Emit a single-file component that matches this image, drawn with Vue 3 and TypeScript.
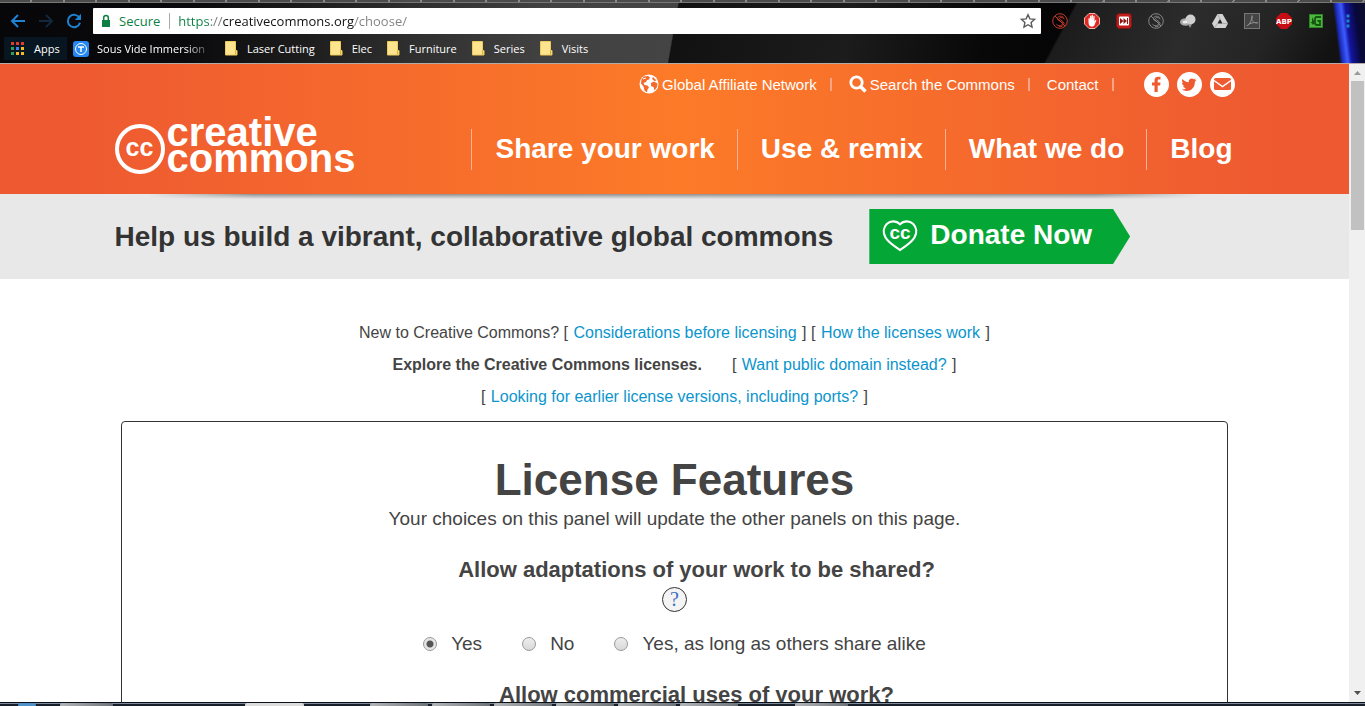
<script setup lang="ts">
import { ref } from 'vue'

const url = ref('https://creativecommons.org/choose/')
const folders: string[] = ['Laser Cutting', 'Elec', 'Furniture', 'Series', 'Visits']
const sections: string[] = ['Share your work', 'Use & remix', 'What we do', 'Blog']
const appColors: string[] = ['#e33b2e', '#e33b2e', '#e33b2e', '#2f9e57', '#3b82f0', '#f5b921', '#2f9e57', '#f5b921', '#f5b921']

interface Choice { value: string; label: string }
const choices: Choice[] = [
  { value: 'yes', label: 'Yes' },
  { value: 'no', label: 'No' },
  { value: 'sharealike', label: 'Yes, as long as others share alike' },
]
const adaptation = ref('yes')
</script>

<template>
  <div class="screen">
    <div class="chrome">
      <div class="tabs"></div>
      <div class="toolbar">
        <div class="nav-buttons">
          <button type="button" aria-label="Back">
            <svg width="16" height="16" viewBox="0 0 16 16"><path d="M15 8H2M8 2L2 8l6 6" fill="none" stroke="#1d83d4" stroke-width="2" /></svg>
          </button>
          <button type="button" aria-label="Forward">
            <svg width="16" height="16" viewBox="0 0 16 16"><path d="M1 8h13M8 2l6 6-6 6" fill="none" stroke="#12283c" stroke-width="2" /></svg>
          </button>
          <button type="button" aria-label="Reload">
            <svg width="16" height="16" viewBox="0 0 16 16"><path d="M13.500 5A6.200 6.200 0 1 0 14 9.800" fill="none" stroke="#1d83d4" stroke-width="2" /><path d="M15 .8v6.200H8.800z" fill="#1d83d4" /></svg>
          </button>
        </div>
        <div class="omnibox">
          <button type="button" class="secure">
            <svg width="10" height="14" viewBox="0 0 10 14"><path d="M1 6h8v7H1z" fill="#0b8043" /><path d="M2.700 6V3.800a2.300 2.300 0 0 1 4.600 0V6" fill="none" stroke="#0b8043" stroke-width="1.500" /></svg>
            Secure
          </button>
          <input v-model="url" class="url" type="text" aria-label="Address" spellcheck="false">
          <button type="button" aria-label="Bookmark this page" class="star">
            <svg width="16" height="16" viewBox="0 0 16 16"><path d="M8 1.700l1.900 4.200 4.600.5-3.400 3.100.9 4.500L8 11.700 4 14l.9-4.500L1.500 6.400l4.600-.5z" fill="none" stroke="#5a5a5a" stroke-width="1.400" /></svg>
          </button>
        </div>
        <div class="extensions">
          <button type="button" aria-label="Script blocker">
            <svg width="16" height="16" viewBox="0 0 16 16"><g fill="none" stroke="#c23a2b"><circle cx="8" cy="8" r="7.300" /><path d="M11.500 4.500C9 2 5 3.500 5.500 6s5 2 5 4.500-4 3-6 .8M12.500 6C10 4 7.500 4 7.500 5.500s4.500 2.500 4.500 5-3 3.500-5 3M3 3l10 10" /></g></svg>
          </button>
          <button type="button" aria-label="Ad blocker">
            <svg width="16" height="16" viewBox="0 0 16 16"><path d="M5 .5h6L15.500 5v6L11 15.500H5L.5 11V5z" fill="#df2822" stroke="#f4b4b0" /><path d="M4.500 9V5.500q.8-.8 1.200 0V8l.4-5q.7-.8 1.200 0v4.500l.4-5.500q.8-.6 1.200 0v5.500l.6-4.500q.9-.6 1.100.2l-.2 5.300 1-1.500q1-.6.9.5l-2 5Q9.500 14 7 13.500 4.500 13 4.500 9z" fill="#fff" /></svg>
          </button>
          <button type="button" aria-label="Speed control">
            <svg width="16" height="16" viewBox="0 0 16 16"><rect x=".5" y=".5" width="15" height="15" rx="3" fill="#be1d1b" stroke="#7a1615" /><rect x="3" y="3.500" width="10" height="9" rx="1" fill="#fff" /><path d="M4 5l3.500 3L4 11zM7.500 5L11 8l-3.500 3zM11 5h1v6h-1z" fill="#8f1716" /></svg>
          </button>
          <button type="button" aria-label="Style switcher">
            <svg width="16" height="16" viewBox="0 0 16 16"><g fill="none" stroke="#858585"><circle cx="8" cy="8" r="7.300" /><path d="M11.500 4.500C9 2 5 3.500 5.500 6s5 2 5 4.500-4 3-6 .8M12.500 6C10 4 7.500 4 7.500 5.500s4.500 2.500 4.500 5-3 3.500-5 3M3 3l10 10" /></g></svg>
          </button>
          <button type="button" aria-label="Globe tools">
            <svg width="16" height="16" viewBox="0 0 16 16"><ellipse cx="5.500" cy="9" rx="5.500" ry="3.800" fill="#a8a8a8" /><circle cx="10.500" cy="6.500" r="5" fill="#cfcfcf" /><path d="M8 11l2 4 2-4z" fill="#999" /><ellipse cx="5" cy="9" rx="2.500" ry="1.500" fill="#eee" /></svg>
          </button>
          <button type="button" aria-label="Drive">
            <svg width="16" height="16" viewBox="0 0 16 16"><path d="M5.500 1h5l5.500 9.500-2.500 4.500h-11L0 10.500z" fill="#d2d2d2" /><path d="M8 6l2.500 4.500h-5z" fill="#242424" /><path d="M5.500 1L8 6M16 10.500h-5.500M2.500 15l3-4.500" stroke="#aaa" /></svg>
          </button>
          <button type="button" aria-label="PDF converter">
            <svg width="16" height="16" viewBox="0 0 16 16"><rect x=".5" y=".5" width="15" height="15" fill="#444" stroke="#777" /><path d="M3 13c3-2 5-6 4.800-9.500C7.800 1.500 9 3 8 5.500s3 5 5.500 4.500S6 8.500 3 13z" fill="none" stroke="#909090" /></svg>
          </button>
          <button type="button" aria-label="Adblock Plus">
            <svg width="16" height="16" viewBox="0 0 16 16"><path d="M5 0h6l5 5v6l-5 5H5l-5-5V5z" fill="#c70d14" /><text x="8" y="10.500" text-anchor="middle" class="abp">ABP</text></svg>
          </button>
          <button type="button" aria-label="Downloader">
            <svg width="16" height="16" viewBox="0 0 16 16"><rect x="1.500" y="1.500" width="13" height="13" fill="#4cb83e" stroke="#2f8425" /><path d="M13 4H8.500Q7 4 7 6v3.500Q7 12 9 12h3V8H9.500" fill="none" stroke="#14570f" stroke-width="1.800" /><path d="M4 4v5H2.500L5 12l2-2.500" fill="#14570f" /></svg>
          </button>
        </div>
        <button type="button" class="menu" aria-label="Menu">
          <svg width="4" height="14" viewBox="0 0 4 14"><path d="M.5.500h3v3h-3zM.5 5.500h3v3h-3zM.5 10.500h3v3h-3z" fill="#1f86c4" /></svg>
        </button>
      </div>
      <nav class="bookmarks" aria-label="Bookmarks">
        <a href="#" class="apps">
          <svg width="13" height="13" viewBox="0 0 13 13">
            <rect v-for="(c, i) in appColors" :key="i" :x="(i % 3) * 5" :y="Math.floor(i / 3) * 5" width="3" height="3" :fill="c" />
          </svg>
          Apps
        </a>
        <a href="#" class="sous">
          <svg width="16" height="16" viewBox="0 0 16 16"><rect width="16" height="16" rx="3" fill="#2487f2" /><circle cx="8" cy="8" r="5.500" fill="none" stroke="#fff" /><path d="M5 6h6M8 6v5" stroke="#fff" stroke-width="1.500" /></svg>
          <span>Sous Vide Immersion</span>
        </a>
        <a v-for="f in folders" :key="f" href="#" class="folder">
          <svg width="13" height="15" viewBox="0 0 13 15"><path d="M.5.500h10v9h1.500v4.500H.5z" fill="#ffe48f" stroke="#eccb58" /><path d="M10.500 9.500v4" stroke="#d8b23a" /></svg>
          {{ f }}
        </a>
      </nav>
    </div>

    <div class="viewport">
      <div class="page">
        <header class="site-header">
          <div class="wrap header-inner">
            <a href="#" class="logo" aria-label="Creative Commons home">
              <span class="cc-ring">cc</span>
              <span class="wordmark">creative<br>commons</span>
            </a>
            <div class="header-right">
              <div class="top-links">
                <a href="#">
                  <svg width="20" height="20" viewBox="0 0 20 20"><circle cx="10" cy="10" r="9.500" fill="#fff" /><path d="M5 2.500l4-.5 2 1.500-1 2-2 .5-1 2-2.500 1 1 2 3 .5 1.500 2-1.500 2-.5 3-2.500-2-1-4L2 9.500l.5-4zM14 3l3.500 3.500-2 .5L13 5zM12 9l3-1.500 3.500 2-.5 3.500-2.500 3.500-1-3.500L12 12z" fill="#f4692c" /><path d="M4 5l3-1M12 14l1 3" stroke="#fff" /></svg>
                  Global Affiliate Network
                </a>
                <span class="bar"></span>
                <a href="#">
                  <svg width="18" height="18" viewBox="0 0 18 18"><circle cx="7.500" cy="7.500" r="5.700" fill="none" stroke="#fff" stroke-width="2.800" /><path d="M11.500 11.500l5 5" stroke="#fff" stroke-width="3.500" /></svg>
                  Search the Commons
                </a>
                <span class="bar"></span>
                <a href="#">Contact</a>
                <span class="bar"></span>
                <div class="social">
                  <a href="#" aria-label="Facebook"><svg width="25" height="25" viewBox="0 0 25 25"><circle cx="12.500" cy="12.500" r="12.500" fill="#fff" /><path d="M10.500 20v-6.500H8v-3h2.500V8.300C10.500 5.800 12 4.700 14.200 4.700h2.300v2.900H15c-1 0-1.300.5-1.300 1.300v1.600h2.800l-.4 3h-2.400V20z" fill="#ee5b31" /></svg></a>
                  <a href="#" aria-label="Twitter"><svg width="25" height="25" viewBox="0 0 25 25"><circle cx="12.500" cy="12.500" r="12.500" fill="#fff" /><path d="M19.500 7.800l-1.800.5 1.300-1.800-2 .8a3.200 3.200 0 0 0-5.300 2.900C9 10.100 7 8.900 5.500 7c-1 1.600-.4 3.300.9 4.200l-1.400-.4c0 1.600 1 2.800 2.500 3.200l-1.400.1c.4 1.300 1.600 2.100 2.900 2.200-1.300 1-3 1.400-4.500 1.200 6 3.500 13.500.5 13.400-7.800z" fill="#ee5b31" /></svg></a>
                  <a href="#" aria-label="Email"><svg width="25" height="25" viewBox="0 0 25 25"><circle cx="12.500" cy="12.500" r="12.500" fill="#fff" /><rect x="4" y="6" width="17" height="12" rx="1.500" fill="#ee5b31" /><path d="M4 8.500l8.500 6 8.500-6" fill="none" stroke="#fff" stroke-width="1.500" /></svg></a>
                </div>
              </div>
              <nav class="sections" aria-label="Main">
                <a v-for="s in sections" :key="s" href="#">{{ s }}</a>
              </nav>
            </div>
          </div>
        </header>

        <div class="banner">
          <div class="wrap banner-inner">
            <span class="pitch">Help us build a vibrant, collaborative global commons</span>
            <a href="#" class="donate">
              <svg width="36" height="32" viewBox="0 0 36 32"><path d="M18 4.200C14.500.5 8.500.5 5 3.800 1.200 7.500.8 13 3.500 17.500 6.500 22.500 12 26 18 30c6-4 11.500-7.500 14.500-12.500C35.200 13 34.800 7.500 31 3.800 27.500.5 21.500.5 18 4.200z" fill="none" stroke="#fff" stroke-width="2.200" /><text x="18" y="19" text-anchor="middle" class="heart-cc">cc</text></svg>
              Donate Now
            </a>
          </div>
        </div>

        <main>
          <div class="intro">
            <p>New to Creative Commons? [ <a href="#">Considerations before licensing</a> ] [ <a href="#">How the licenses work</a> ]</p>
            <p class="explore"><strong>Explore the Creative Commons licenses.</strong><span>[ <a href="#">Want public domain instead?</a> ]</span></p>
            <p>[ <a href="#">Looking for earlier license versions, including ports?</a> ]</p>
          </div>
          <section class="panel">
            <h1>License Features</h1>
            <p class="lead">Your choices on this panel will update the other panels on this page.</p>
            <h2 id="q-adapt">Allow adaptations of your work to be shared?</h2>
            <button type="button" class="help" aria-label="Help">?</button>
            <div class="choices" role="radiogroup" aria-labelledby="q-adapt">
              <label v-for="c in choices" :key="c.value">
                <input v-model="adaptation" type="radio" name="adaptation" :value="c.value">
                {{ c.label }}
              </label>
            </div>
            <h2>Allow commercial uses of your work?</h2>
          </section>
        </main>
      </div>
      <div class="scrollbar">
        <svg width="16" height="17" viewBox="0 0 16 17"><path d="M5 11l3.500-4 3.500 4z" fill="#9a9a9a" /></svg>
        <div class="thumb"></div>
        <svg width="16" height="17" viewBox="0 0 16 17"><path d="M5 6h7l-3.500 4z" fill="#505050" /></svg>
      </div>
    </div>
    <div class="taskbar">
      <span class="orb"></span>
      <span class="task"></span>
      <span class="task front"></span>
      <span class="task-group"><i></i><i></i><i></i><i></i><i></i><i></i></span>
      <span class="task last"></span>
    </div>
  </div>
</template>

<style>
body {
  overflow: hidden;
}
</style>

<style scoped>
* {
  box-sizing: border-box;
}

.screen {
  display: flex;
  flex-direction: column;
  height: 100vh;
  font-family: "Liberation Sans", Arial, sans-serif;
  color: #444;
  background: #fff;
}

a {
  text-decoration: none;
}

button {
  display: flex;
  align-items: center;
  justify-content: center;
  padding: 0;
  border: 0;
  background: none;
  font: inherit;
}

svg {
  display: block;
  flex: none;
}

.chrome {
  flex: none;
  border-bottom: 1px solid #b5aaa5;
  background:
    linear-gradient(83deg, transparent 97.600%, #1a2ab8 97.800%, #3d5cff 98.200%, #1414a0 98.500%, #08083c 99.200%, #0c0c28 100%),
    linear-gradient(118deg, transparent 77%, #1c1c1c 77.200%, #2c2c2c 86%, #242424 92%, #121212 97%),
    linear-gradient(100deg, #070608 0%, #0a090b 14%, #19191a 21%, #303030 31%, #414141 40%, #444 49.300%, #111 49.400%, #1c1c1c 62%, #080808 72%, #040406 79%);
  font-family: "Open Sans", "Noto Sans", sans-serif;
}

.tabs {
  height: 3px;
  border-bottom: 1px solid #777;
  background: repeating-linear-gradient(100deg, #4b4b4b 0, #4b4b4b 30px, #8a8a8a 30px, #8a8a8a 32px);
}

.toolbar {
  display: flex;
  align-items: center;
  padding: 5px 0 0 10px;
}

.nav-buttons {
  display: flex;
  gap: 12px;
  width: 83px;
}

.omnibox {
  display: flex;
  flex: 1;
  align-items: center;
  height: 26px;
  padding: 0 5px 0 8px;
  border-radius: 1px;
  background: #fff;
  font-size: 13px;
}

.secure {
  gap: 8px;
  height: 16px;
  padding-right: 9px;
  border-right: 1px solid #aaa;
  color: #0b8043;
}

.url {
  flex: 1;
  min-width: 0;
  padding: 0 0 0 8px;
  border: 0;
  outline: 0;
  background: linear-gradient(90deg, #0b8043 40px, #777 40px, #777 52px, #111 52px, #111 184px, #808080 184px);
  -webkit-background-clip: text;
  background-clip: text;
  -webkit-text-fill-color: transparent;
  font: inherit;
}

.extensions {
  display: flex;
  gap: 16px;
  padding: 0 22px 0 11px;
}

.menu {
  width: 4px;
  margin-right: 15px;
}

.abp {
  fill: #fff;
  font: bold 7px "DejaVu Sans", sans-serif;
}

.bookmarks {
  display: flex;
  align-items: center;
  height: 29px;
  padding: 0 0 0 4px;
  font-size: 11px;
}

.bookmarks a {
  display: flex;
  align-items: center;
  color: #fff;
}

.bookmarks .apps {
  gap: 10px;
  width: 63px;
  height: 23px;
  margin-right: 6px;
  padding-left: 7px;
  background: #071620;
}

.bookmarks .sous {
  gap: 8px;
  width: 152px;
}

.sous span {
  white-space: nowrap;
  -webkit-mask-image: linear-gradient(90deg, #000 82%, rgba(0, 0, 0, 0.300));
  mask-image: linear-gradient(90deg, #000 82%, rgba(0, 0, 0, 0.300));
}

.bookmarks .folder {
  gap: 9px;
  margin-right: 15px;
}

.viewport {
  display: flex;
  flex: 1;
  min-height: 0;
}

.page {
  flex: 1;
  min-width: 0;
  overflow: hidden;
}

.wrap {
  width: 83%;
  min-width: 1120px;
  margin: 0 auto;
}

.site-header {
  position: relative;
  z-index: 1;
  background: linear-gradient(90deg, #ee5931 0%, #ee5931 5%, #fc7a28 50%, #fc7a28 51%, #ee5931 95%);
}

.site-header::after {
  position: absolute;
  top: 100%;
  right: 11%;
  left: 11%;
  height: 5px;
  background: linear-gradient(rgba(0, 0, 0, 0.380), transparent);
  -webkit-mask-image: linear-gradient(90deg, transparent, #000 10%, #000 90%, transparent);
  mask-image: linear-gradient(90deg, transparent, #000 10%, #000 90%, transparent);
  content: "";
}

.header-inner {
  display: flex;
  justify-content: space-between;
  height: 130px;
}

.logo {
  display: flex;
  align-items: flex-end;
  align-self: flex-end;
  gap: 2px;
  margin-bottom: 20px;
  color: #fff;
}

.cc-ring {
  width: 50px;
  height: 50px;
  border: 4px solid #fff;
  border-radius: 50%;
  font: bold 25px/38px "Liberation Sans", Arial, sans-serif;
  text-align: center;
}

.wordmark {
  padding-bottom: 3px;
  font-size: 40px;
  font-weight: bold;
  line-height: 26px;
}

.top-links {
  display: flex;
  align-items: center;
  justify-content: flex-end;
  height: 40px;
}

.top-links a {
  display: flex;
  align-items: center;
  gap: 3px;
  color: #fff;
  font-size: 15px;
}

.bar {
  width: 2px;
  height: 13px;
  margin: 0 17px 0 13px;
  background: #f9a585;
}

.social {
  display: flex;
  gap: 8px;
  margin-left: 13px;
}

.sections {
  display: flex;
  justify-content: flex-end;
  margin-top: 25px;
}

.sections a {
  padding: 0 22px 2px 23px;
  border-left: 1px solid #fbb193;
  color: #fff;
  font-size: 28px;
  font-weight: bold;
  line-height: 39px;
}

.sections a:last-child {
  padding-right: 2px;
}

.banner {
  background: #e8e8e8;
}

.banner-inner {
  display: flex;
  align-items: center;
  height: 85px;
}

.pitch {
  color: #333;
  font-size: 28px;
  font-weight: bold;
}

.donate {
  display: flex;
  align-items: center;
  gap: 12px;
  height: 55px;
  margin-left: 36px;
  padding: 0 38px 4px 13px;
  clip-path: polygon(0 0, calc(100% - 17px) 0, 100% 50%, calc(100% - 17px) 100%, 0 100%);
  background: #04a635;
  color: #fff;
  font-size: 28px;
  font-weight: bold;
}

.donate svg {
  align-self: flex-end;
  margin-bottom: 8px;
}

.heart-cc {
  fill: #fff;
  font: bold 19px "Liberation Sans", Arial, sans-serif;
}

.intro {
  padding-top: 38px;
  font-size: 16px;
  line-height: 32px;
  text-align: center;
}

p {
  margin: 0;
}

.intro a {
  margin: 0 1px;
  color: #0b95cd;
}

.explore {
  display: flex;
  justify-content: center;
  gap: 30px;
}

.panel {
  display: flex;
  flex-direction: column;
  align-items: center;
  width: 82%;
  min-height: 600px;
  margin: 8px auto 0;
  padding-top: 33px;
  border: 1px solid #333;
  border-radius: 4px;
}

h1 {
  margin: 0;
  font-size: 44px;
  line-height: 50px;
}

.lead {
  font-size: 19px;
  line-height: 28px;
}

h2 {
  margin: 22px 0 0;
  padding-left: 44px;
  font-size: 22px;
  line-height: 30px;
}

.help {
  width: 25px;
  height: 25px;
  margin-top: 2px;
  border: 1px solid #333;
  border-radius: 50%;
  background: #f4f4f4;
  color: #3b6fc0;
  font: 20px/23px "Liberation Serif", "Times New Roman", serif;
}

.choices {
  display: flex;
  gap: 40px;
  margin-top: 18px;
}

.choices label {
  display: flex;
  align-items: center;
  gap: 14px;
  font-size: 19px;
  line-height: 28px;
}

.choices input {
  width: 14px;
  height: 14px;
  margin: 0;
  border: 1px solid #999;
  border-radius: 50%;
  appearance: none;
  background: linear-gradient(#eee, #d8d8d8);
}

.choices input:checked {
  background: radial-gradient(circle, #555 0, #555 3px, #e6e6e6 4px);
}

.scrollbar {
  display: flex;
  flex-direction: column;
  width: 16px;
  background: #f0f0f0;
}

.thumb {
  height: 149px;
  margin: 0 1px auto 2px;
  background: #c1c1c1;
}

.taskbar {
  display: flex;
  height: 4px;
  border-top: 1px solid #0b1119;
  background: linear-gradient(#7f8b98 1px, #17202b 1px);
}

.orb {
  width: 18px;
  margin: 0 32px 0 18px;
  border-radius: 9px 9px 0 0;
  background: #4f92c9;
}

.task,
.task-group i {
  width: 53px;
  border-radius: 2px 2px 0 0;
  background: linear-gradient(90deg, #b3b6b8, #6d7379);
}

.front {
  margin: 0 66px 0 132px;
  width: 59px;
  background: #dcdcdc;
}

.task:nth-child(2) {
  margin-left: -8px;
}

.task-group {
  display: flex;
  gap: 4px;
}

.task-group i {
  width: 58px;
}

.last {
  margin-left: 57px;
}
</style>
